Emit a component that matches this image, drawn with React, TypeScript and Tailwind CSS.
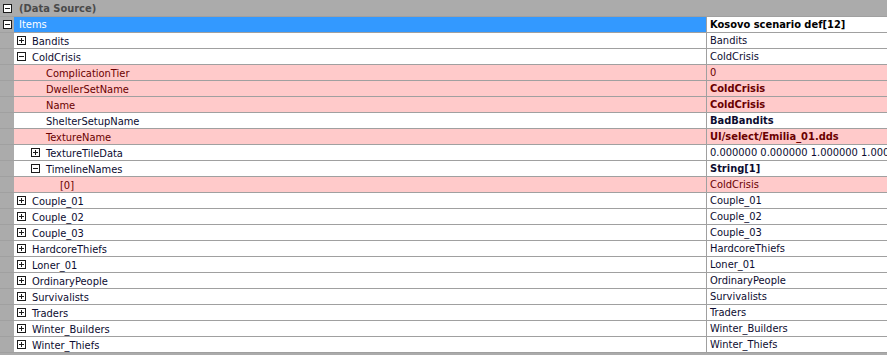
import React from 'react';

type Row = {
  name: string;
  value: string;
  level: number;
  box?: '+' | '-';
  pink?: boolean;
  bold?: boolean;
};

const rows: Row[] = [
  { name: 'Bandits', value: 'Bandits', level: 1, box: '+' },
  { name: 'ColdCrisis', value: 'ColdCrisis', level: 1, box: '-' },
  { name: 'ComplicationTier', value: '0', level: 2, pink: true },
  { name: 'DwellerSetName', value: 'ColdCrisis', level: 2, pink: true, bold: true },
  { name: 'Name', value: 'ColdCrisis', level: 2, pink: true, bold: true },
  { name: 'ShelterSetupName', value: 'BadBandits', level: 2, bold: true },
  { name: 'TextureName', value: 'UI/select/Emilia_01.dds', level: 2, pink: true, bold: true },
  { name: 'TextureTileData', value: '0.000000 0.000000 1.000000 1.000000', level: 2, box: '+' },
  { name: 'TimelineNames', value: 'String[1]', level: 2, box: '-', bold: true },
  { name: '[0]', value: 'ColdCrisis', level: 3, pink: true },
  { name: 'Couple_01', value: 'Couple_01', level: 1, box: '+' },
  { name: 'Couple_02', value: 'Couple_02', level: 1, box: '+' },
  { name: 'Couple_03', value: 'Couple_03', level: 1, box: '+' },
  { name: 'HardcoreThiefs', value: 'HardcoreThiefs', level: 1, box: '+' },
  { name: 'Loner_01', value: 'Loner_01', level: 1, box: '+' },
  { name: 'OrdinaryPeople', value: 'OrdinaryPeople', level: 1, box: '+' },
  { name: 'Survivalists', value: 'Survivalists', level: 1, box: '+' },
  { name: 'Traders', value: 'Traders', level: 1, box: '+' },
  { name: 'Winter_Builders', value: 'Winter_Builders', level: 1, box: '+' },
  { name: 'Winter_Thiefs', value: 'Winter_Thiefs', level: 1, box: '+' },
];

function Box({ sign }: { sign: '+' | '-' }) {
  return (
    <span className="relative inline-block w-[9px] h-[9px] border border-[#1a1a1a] bg-white shrink-0">
      <span className="absolute left-[1px] top-[3px] w-[5px] h-[1px] bg-[#1a1a1a]" />
      {sign === '+' && <span className="absolute left-[3px] top-[1px] w-[1px] h-[5px] bg-[#1a1a1a]" />}
    </span>
  );
}

export default function App() {
  return (
    <div
      className="w-[887px] h-[355px] bg-[#ababab] overflow-hidden text-[11px] select-none"
      style={{ fontFamily: '"DejaVu Sans Condensed", "Liberation Sans", Arial, sans-serif' }}
    >
      {/* category header */}
      <div className="flex h-[17px] items-center border-b border-[#a0a0a0]">
        <div className="w-[14px] flex justify-center pl-[1px]">
          <Box sign="-" />
        </div>
        <span className="pl-[5px] pt-[1px] font-bold text-[#4a4a4a] leading-[15px]">(Data Source)</span>
      </div>

      {/* Items (selected) */}
      <div className="flex h-[16px] border-b border-[#a0a0a0]">
        <div className="w-[14px] flex items-center justify-center pl-[1px]">
          <Box sign="-" />
        </div>
        <div className="flex-1 bg-[#3399ff] text-white pl-[5px] pt-[1px] leading-[14px] overflow-hidden">Items</div>
        <div className="w-[181px] bg-white border-l border-[#a0a0a0] pl-[3px] pt-[1px] font-bold text-black leading-[14px] whitespace-nowrap overflow-hidden">
          Kosovo scenario def[12]
        </div>
      </div>

      {rows.map((r, i) => {
        const bg = r.pink ? 'bg-[#ffcaca]' : 'bg-white';
        const textCol = r.pink ? 'text-[#6a0000]' : 'text-[#0c0c30]';
        return (
          <div key={i} className="flex h-[16px] border-b border-[#a0a0a0]">
            <div className="w-[14px]" />
            <div
              className={`flex-1 flex items-center ${bg} ${textCol}`}
              style={{ paddingLeft: 3 + (r.level - 1) * 14 }}
            >
              <span className="w-[15px] flex items-center shrink-0">{r.box && <Box sign={r.box} />}</span>
              <span className="leading-[15px] pt-[1px] whitespace-nowrap">{r.name}</span>
            </div>
            <div
              className={`w-[181px] border-l border-[#a0a0a0] pl-[3px] pt-[1px] leading-[14px] whitespace-nowrap overflow-hidden ${bg} ${
                r.bold ? 'font-bold' : ''
              } ${textCol}`}
            >
              {r.value}
            </div>
          </div>
        );
      })}
    </div>
  );
}
